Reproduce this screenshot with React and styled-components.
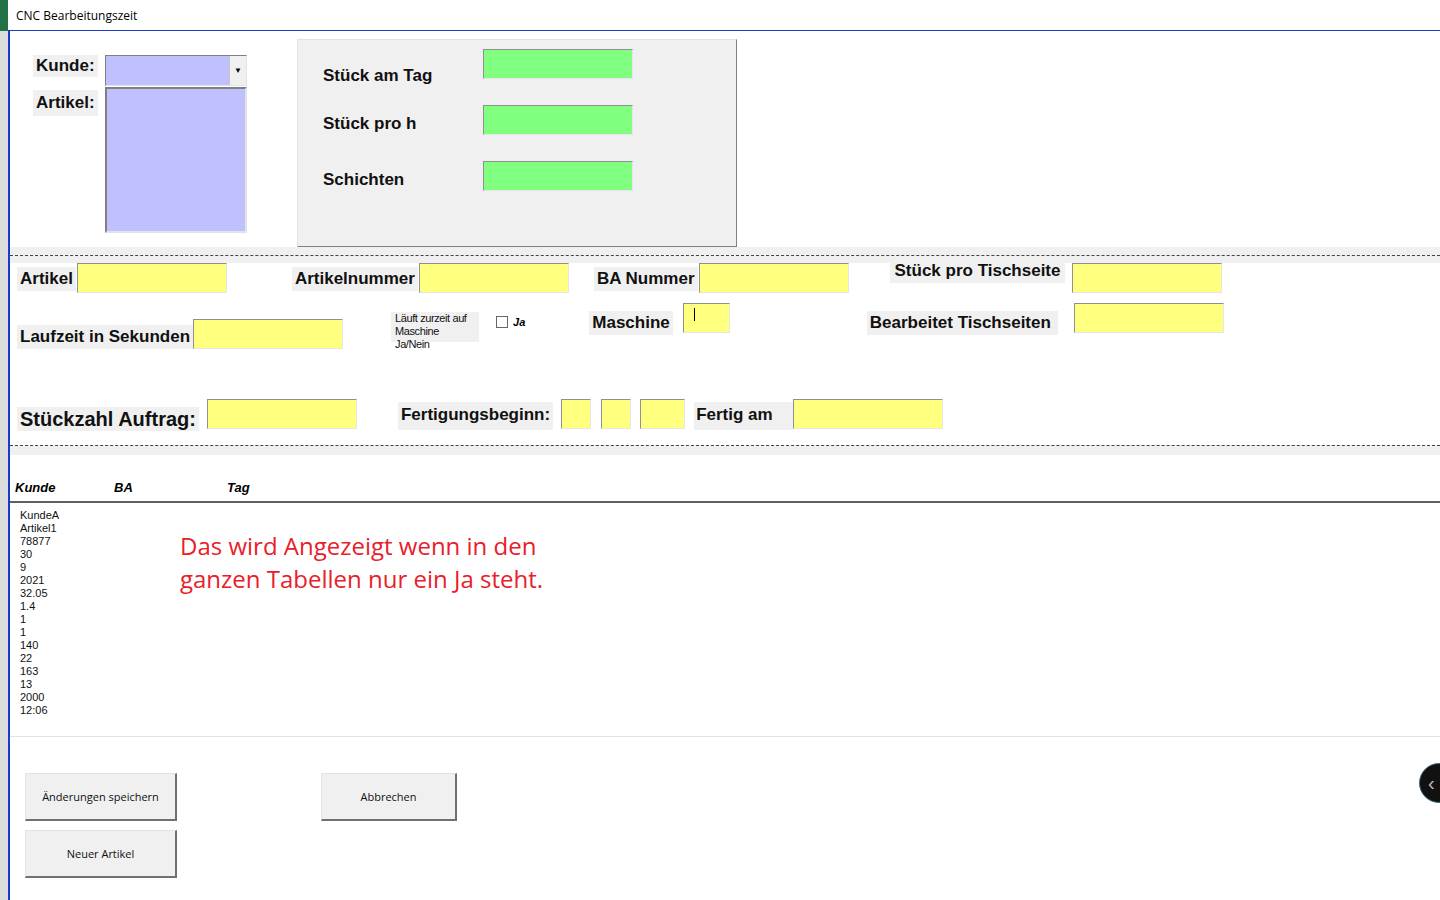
import React from "react";
import styled, { createGlobalStyle } from "styled-components";

const G = createGlobalStyle`
  html,body{margin:0;padding:0;background:#fff;overflow:hidden;}
  body{font-family:"Liberation Sans",Arial,sans-serif;}
`;
const Page = styled.div`width:1440px;height:900px;display:flex;position:relative;overflow:hidden;`;
const Side = styled.div`width:8px;flex:none;background:linear-gradient(#217346 0 31px,#dcdcdc 31px);`;
const Win = styled.div`flex:1;display:flex;flex-direction:column;`;
const Title = styled.div`height:31px;box-sizing:border-box;border-bottom:1px solid #1a3bc8;display:flex;align-items:center;padding-left:8px;font:12px "Open Sans",sans-serif;color:#000;`;
const Body = styled.div`flex:1;border-left:2px solid #1a3bc8;display:flex;flex-direction:column;`;
const Top = styled.div`height:216px;display:flex;padding:8px 0 0 0;box-sizing:border-box;`;
const LeftCol = styled.div`display:grid;grid-template-columns:72px 142px;column-gap:0;margin:16px 0 0 23px;align-content:start;`;
const Lbl = styled.div`background:#f0f0f0;font-weight:bold;font-size:${p=>p.fs||17}px;color:#111;padding:${p=>p.pad||"2px 3px"};margin-top:${p=>p.mt||0}px;margin-left:${p=>p.ml||0}px;white-space:nowrap;align-self:flex-start;height:fit-content;`;
const Combo = styled.div`height:31px;box-sizing:border-box;background:#c0c0ff;border:1px solid;border-color:#808080 #e3e3e3 #e3e3e3 #808080;display:flex;justify-content:flex-end;`;
const Drop = styled.div`width:16px;background:#f0f0f0;border-left:1px solid #c8c8c8;display:flex;align-items:center;justify-content:center;font-size:8px;`;
const List = styled.div`height:146px;margin-top:1px;box-sizing:border-box;background:#c0c0ff;border:2px solid;border-color:#808080 #e3e3e3 #e3e3e3 #808080;`;
const Frame = styled.div`margin-left:50px;width:440px;height:208px;box-sizing:border-box;background:#f0f0f0;border:1px solid;border-color:#e3e3e3 #808080 #808080 #e3e3e3;display:grid;grid-template-columns:160px 150px;grid-template-rows:56px 56px 56px;padding:9px 0 0 25px;`;
const FLbl = styled.div`font-weight:bold;font-size:17px;color:#111;padding-top:${p=>p.pt}px;`;
const Inp = styled.div`width:${p=>p.w}px;height:${p=>p.h||30}px;flex:none;box-sizing:border-box;background:${p=>p.bg||"#ffff80"};border:1px solid;border-color:#909090 #e6e6e6 #e6e6e6 #909090;margin-left:${p=>p.ml||0}px;margin-top:${p=>p.mt||0}px;position:relative;`;
const Band = styled.div`height:${p=>p.h}px;background:#f0f0f0;position:relative;display:flex;flex-direction:column;justify-content:${p=>p.top?"flex-start":"center"};`;
const Dash = styled.div`border-top:1px dashed #444;`;
const Mid = styled.div`height:182px;display:flex;flex-direction:column;`;
const Row = styled.div`display:flex;align-items:flex-start;height:${p=>p.h}px;padding-left:7px;`;
const Small = styled.div`background:#f0f0f0;font-size:11px;line-height:13px;letter-spacing:-0.4px;color:#111;padding:0 4px;width:80px;height:30px;margin:${p=>p.m};`;
const Check = styled.div`display:flex;align-items:center;gap:5px;margin:${p=>p.m};font-size:11px;font-weight:bold;font-style:italic;`;
const Box = styled.div`width:10px;height:10px;border:1px solid #666;background:#fff;`;
const Caret = styled.div`position:absolute;left:10px;top:4px;width:1px;height:13px;background:#000;`;
const Head = styled.div`height:46px;display:flex;align-items:flex-end;padding:0 0 6px 5px;box-sizing:border-box;`;
const H = styled.div`font-weight:bold;font-style:italic;font-size:13px;width:${p=>p.w}px;`;
const Out = styled.div`height:236px;border-top:2px solid #606060;border-bottom:1px solid #e3e3e3;display:flex;padding:6px 0 0 10px;box-sizing:border-box;`;
const Lines = styled.div`font-size:11px;line-height:13px;color:#111;width:160px;`;
const Red = styled.div`color:#e8202a;font:24px "Open Sans",sans-serif;line-height:33px;margin-top:20px;`;
const Btns = styled.div`display:grid;grid-template-columns:152px 136px;column-gap:144px;row-gap:9px;padding:36px 0 0 15px;`;
const Btn = styled.div`height:48px;box-sizing:border-box;background:#f0f0f0;border:1px solid;border-color:#e3e3e3 #707070 #707070 #e3e3e3;border-width:1px 2px 2px 1px;display:flex;align-items:center;justify-content:center;font:11px "Open Sans",sans-serif;color:#111;`;
const Circle = styled.div`position:absolute;left:1419px;top:763px;width:40px;height:40px;border-radius:50%;background:#111;border:1px solid #3a6a8a;color:#bbb;display:flex;align-items:center;padding-left:8px;box-sizing:border-box;font-size:20px;`;

const data=["KundeA","Artikel1","78877","30","9","2021","32.05","1.4","1","1","140","22","163","13","2000","12:06"];

export default function App(){
  return <Page><G/>
    <Side/>
    <Win>
      <Title>CNC Bearbeitungszeit</Title>
      <Body>
        <Top>
          <LeftCol>
            <Lbl pad="1px 3px" style={{width:"fit-content"}}>Kunde:</Lbl>
            <Combo><Drop>▼</Drop></Combo>
            <Lbl pad="3px 3px" mt={-104} style={{width:"fit-content",gridColumn:1,gridRow:2,marginTop:4}}>Artikel:</Lbl>
            <List style={{gridColumn:2,gridRow:2}}/>
          </LeftCol>
          <Frame>
            <FLbl pt={17}>Stück am Tag</FLbl><Inp w={150} bg="#80ff80"/>
            <FLbl pt={9}>Stück pro h</FLbl><Inp w={150} bg="#80ff80"/>
            <FLbl pt={9}>Schichten</FLbl><Inp w={150} bg="#80ff80"/>
          </Frame>
        </Top>
        <Band h={16}><Dash/></Band>
        <Mid>
          <Row h={40}>
            <Lbl mt={4}>Artikel</Lbl>
            <Inp w={150} ml={1}/>
            <Lbl mt={4} ml={65}>Artikelnummer</Lbl>
            <Inp w={150} ml={1}/>
            <Lbl mt={4} ml={25}>BA Nummer</Lbl>
            <Inp w={150} ml={1}/>
            <Lbl mt={-2} ml={41} pad="0 5px 2px">Stück pro Tischseite</Lbl>
            <Inp w={150} ml={7}/>
          </Row>
          <Row h={96}>
            <Lbl mt={22}>Laufzeit in Sekunden</Lbl>
            <Inp w={150} mt={16}/>
            <Small m="9px 0 0 48px">Läuft zurzeit auf Maschine Ja/Nein</Small>
            <Check m="13px 0 0 17px"><Box/>Ja</Check>
            <Lbl mt={8} ml={64}>Maschine</Lbl>
            <Inp w={47} ml={10}><Caret/></Inp>
            <Lbl mt={8} ml={137} pad="2px 7px 2px 3px">Bearbeitet Tischseiten</Lbl>
            <Inp w={150} ml={16}/>
          </Row>
          <Row h={46}>
            <Lbl fs={20} mt={8} pad="1px 3px 0 3px">Stückzahl Auftrag:</Lbl>
            <Inp w={150} ml={8}/>
            <Lbl mt={3} ml={41} pad="3px 3px 5px">Fertigungsbeginn:</Lbl>
            <Inp w={30} ml={8}/>
            <Inp w={30} ml={10}/>
            <Inp w={45} ml={9}/>
            <Lbl mt={3} ml={9} pad="3px 20px 5px 2px">Fertig am</Lbl>
            <Inp w={150}/>
          </Row>
        </Mid>
        <Band h={10} top><Dash/></Band>
        <Head><H w={99}>Kunde</H><H w={113}>BA</H><H w={60}>Tag</H></Head>
        <Out>
          <Lines>{data.map((d,i)=><div key={i}>{d}</div>)}</Lines>
          <Red>Das wird Angezeigt wenn in den<br/>ganzen Tabellen nur ein Ja steht.</Red>
        </Out>
        <Btns>
          <Btn>Änderungen speichern</Btn>
          <Btn>Abbrechen</Btn>
          <Btn>Neuer Artikel</Btn>
        </Btns>
      </Body>
    </Win>
    <Circle>‹</Circle>
  </Page>;
}
